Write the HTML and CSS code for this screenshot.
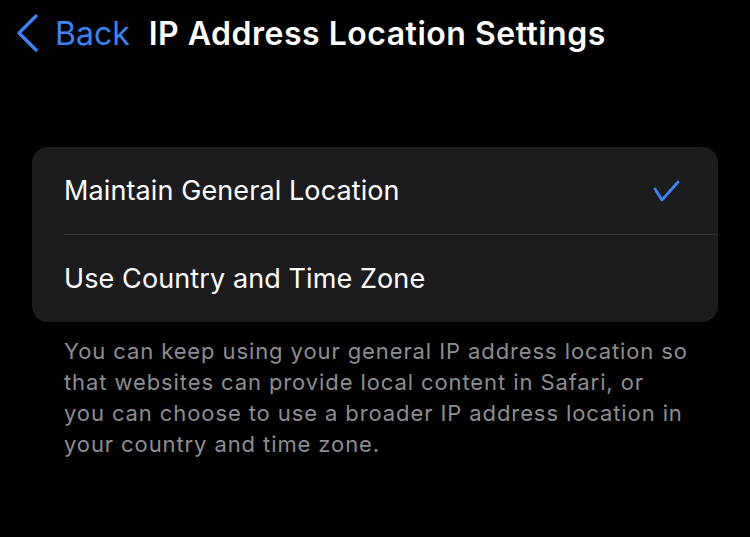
FILE: index.html
```html
<!DOCTYPE html>
<html lang="en">
<head>
  <meta charset="UTF-8">
  <title>IP Address Location Settings</title>
  <link rel="stylesheet" href="styles.css">
</head>
<body>

  <div class="nav-bar">
    <a class="back-link" href="#">
      <svg class="chevron" width="26" height="38" viewBox="0 0 26 38">
        <path d="M22 2 L5 19 L22 36" fill="none" stroke="#3a84f6" stroke-width="3.2" stroke-linecap="round" stroke-linejoin="round"/>
      </svg>
      <span>Back</span>
    </a>
    <h1 class="nav-title">IP Address Location Settings</h1>
  </div>

  <div class="group">
    <div class="row">
      <span class="row-label">Maintain General Location</span>
      <svg class="check" width="28" height="24" viewBox="0 0 28 24">
        <path d="M3 10 L10 21 L26 3" fill="none" stroke="#3a84f6" stroke-width="2.8" stroke-linecap="round" stroke-linejoin="round"/>
      </svg>
    </div>
    <div class="row">
      <span class="row-label">Use Country and Time Zone</span>
    </div>
  </div>

  <p class="footer-note">You can keep using your general IP address location so<br>that websites can provide local content in Safari, or<br>you can choose to use a broader IP address location in<br>your country and time zone.</p>

</body>
</html>
```

FILE: styles.css
```css
body {
  margin: 0;
  background: #000;
  color: #fff;
  font-family: Inter, "Noto Sans", sans-serif;
  width: 750px;
  height: 537px;
  overflow: hidden;
}

.nav-bar {
  display: flex;
  align-items: center;
  height: 66px;
  padding-left: 14px;
}

.back-link {
  display: flex;
  align-items: center;
  color: #3a84f6;
  text-decoration: none;
  font-size: 32px;
}

.chevron {
  margin-right: 15px;
}

.nav-title {
  margin: 0 0 0 19px;
  font-size: 32px;
  font-weight: 600;
  letter-spacing: 0.5px;
}

.group {
  margin: 81px 32px 0 32px;
  background: #1c1c1e;
  border-radius: 16px;
  overflow: hidden;
}

.row {
  display: flex;
  align-items: center;
  justify-content: space-between;
  height: 87px;
  margin-left: 32px;
  padding-right: 38px;
}

.row + .row {
  border-top: 1px solid #38383a;
}

.row-label {
  font-size: 27px;
  letter-spacing: 0.1px;
}

.footer-note {
  margin: 14px 0 0 64px;
  color: #8d8d93;
  font-size: 22px;
  line-height: 31px;
  letter-spacing: 0.9px;
  white-space: nowrap;
}
```
